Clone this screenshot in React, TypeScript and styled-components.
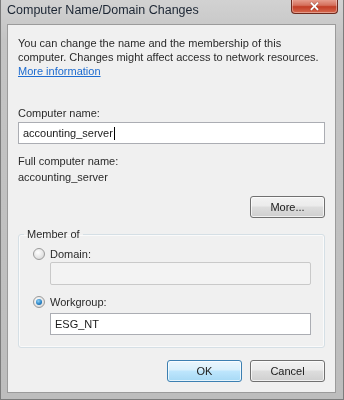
import React from 'react';
import styled, { createGlobalStyle } from 'styled-components';

const Global = createGlobalStyle`
  html, body { margin: 0; padding: 0; background: #c2c2c2; }
  body {
    width: 344px; height: 400px; overflow: hidden;
    font-family: "Liberation Sans", Arial, sans-serif;
    font-size: 11px; color: #222;
  }
`;

const Window = styled.div`
  width: 344px; height: 400px; box-sizing: border-box;
  display: flex; flex-direction: column;
  background: linear-gradient(180deg, #d2d2d2 0%, #c4c4c4 10%, #bdbdbd 100%);
  border: 1px solid #7c7c7c; border-top: none;
  filter: blur(0.5px);
`;

const TitleBar = styled.div`
  height: 24px; flex: none;
  display: flex; align-items: flex-start; justify-content: space-between;
  padding: 0 5px 0 6px;
`;

const Title = styled.div`
  font-size: 12.5px; line-height: 20px; color: #1b2533;
`;

const CloseButton = styled.div`
  width: 47px; height: 15px; box-sizing: border-box;
  margin-top: -1px;
  display: flex; align-items: center; justify-content: center;
  border: 1px solid #6e2a1e; border-top: none;
  border-radius: 0 0 4px 4px;
  background: linear-gradient(180deg, #e9a596 0%, #d5705c 45%, #c23d26 55%, #d7694f 100%);
  box-shadow: inset 0 0 0 1px rgba(255,255,255,0.35);
  color: #fff; font-size: 13px; font-weight: bold; line-height: 1;
  text-shadow: 0 0 1px #5a1a10;
`;

const Client = styled.div`
  flex: 1;
  margin: 0 7px 6px 6px;
  background: #f0f0f0;
  border: 1px solid #9b9b9b;
  padding: 11px 10px 10px 10px;
  display: flex; flex-direction: column;
`;

const Intro = styled.p`
  margin: 0; line-height: 14px; color: #2a2a2a;
`;

const Link = styled.a`
  color: #1e6cd0; text-decoration: underline;
`;

const Label = styled.div<{ $gap: number }>`
  margin-top: ${p => p.$gap}px;
  line-height: 14px; color: #2a2a2a;
`;

const Field = styled.div<{ $gap: number; $h: number; $disabled?: boolean; $indent?: number }>`
  margin-top: ${p => p.$gap}px;
  margin-left: ${p => p.$indent ?? 0}px;
  height: ${p => p.$h}px; box-sizing: border-box;
  display: flex; align-items: center;
  padding-left: 4px;
  background: ${p => (p.$disabled ? '#f3f3f3' : '#ffffff')};
  border: 1px solid ${p => (p.$disabled ? '#c9c9c9' : '#abadb3')};
  border-radius: ${p => (p.$disabled ? 2 : 0)}px;
  color: #1a1a1a; font-size: 11px;
`;

const Caret = styled.span`
  display: inline-block; width: 1px; height: 13px; background: #000; margin-left: 1px;
`;

const Button = styled.div<{ $default?: boolean }>`
  width: 75px; height: 22px; box-sizing: border-box;
  display: flex; align-items: center; justify-content: center;
  border-radius: 3px;
  border: 1px solid ${p => (p.$default ? '#3c7fb1' : '#707070')};
  background: ${p =>
    p.$default
      ? 'linear-gradient(180deg, #eaf6fd 0%, #d9f0fc 45%, #bee6fd 50%, #a7d9f5 100%)'
      : 'linear-gradient(180deg, #f2f2f2 0%, #ebebeb 45%, #dddddd 50%, #cfcfcf 100%)'};
  box-shadow: inset 0 0 0 1px rgba(255,255,255,0.7);
  color: #1a1a1a; font-size: 11px;
`;

const MoreRow = styled.div`
  margin-top: 12px; display: flex; justify-content: flex-end;
`;

const Group = styled.fieldset`
  margin: 9px 0 0 0;
  padding: 6px 13px 12px 14px;
  border: 1px solid #d5dfe5;
  border-radius: 3px;
  box-shadow: inset 0 0 0 1px #fafafa;
  display: flex; flex-direction: column;
  min-width: 0;
`;

const Legend = styled.legend`
  margin-left: -9px; padding: 0 3px;
  line-height: 14px; color: #2a2a2a;
`;

const Option = styled.div<{ $gap: number }>`
  margin-top: ${p => p.$gap}px;
  display: flex; align-items: center; gap: 5px;
  line-height: 14px; color: #2a2a2a;
`;

const Radio = styled.span<{ $checked?: boolean }>`
  width: 12px; height: 12px; box-sizing: border-box; flex: none;
  border-radius: 50%;
  border: 1px solid #9a9a9a;
  background: radial-gradient(circle at 40% 35%, #ffffff 0%, #e6e6e6 55%, #cfcfcf 100%);
  display: flex; align-items: center; justify-content: center;
  &::after {
    content: '';
    display: ${p => (p.$checked ? 'block' : 'none')};
    width: 6px; height: 6px; border-radius: 50%;
    background: radial-gradient(circle at 40% 35%, #8fd0f5 0%, #2a85c8 55%, #0f4e86 100%);
  }
`;

const ButtonRow = styled.div`
  margin-top: 12px; display: flex; justify-content: flex-end; gap: 8px;
`;

export default function App() {
  return (
    <>
      <Global />
      <Window>
        <TitleBar>
          <Title>Computer Name/Domain Changes</Title>
          <CloseButton>✕</CloseButton>
        </TitleBar>
        <Client>
          <Intro>
            You can change the name and the membership of this
            <br />
            computer. Changes might affect access to network resources.
            <br />
            <Link>More information</Link>
          </Intro>
          <Label $gap={28}>Computer name:</Label>
          <Field $gap={2} $h={22}>
            accounting_server
            <Caret />
          </Field>
          <Label $gap={10}>Full computer name:</Label>
          <Label $gap={2}>accounting_server</Label>
          <MoreRow>
            <Button>More...</Button>
          </MoreRow>
          <Group>
            <Legend>Member of</Legend>
            <Option $gap={0}>
              <Radio />
              Domain:
            </Option>
            <Field $gap={1} $h={23} $disabled $indent={17} />
            <Option $gap={10}>
              <Radio $checked />
              Workgroup:
            </Option>
            <Field $gap={4} $h={22} $indent={17}>
              ESG_NT
            </Field>
          </Group>
          <ButtonRow>
            <Button $default>OK</Button>
            <Button>Cancel</Button>
          </ButtonRow>
        </Client>
      </Window>
    </>
  );
}
